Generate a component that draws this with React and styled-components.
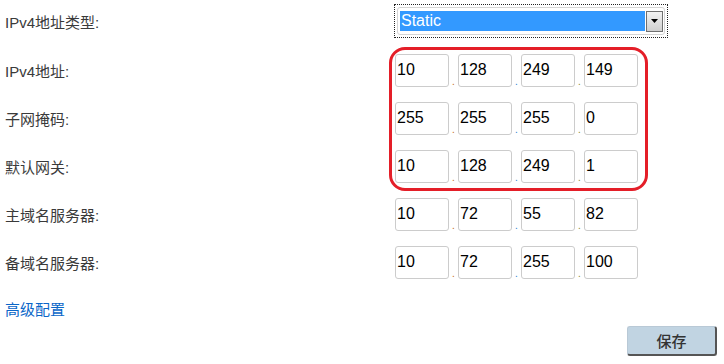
import React from 'react';
import styled, { createGlobalStyle } from 'styled-components';

const GlobalStyle = createGlobalStyle`
  html, body {
    margin: 0;
    padding: 0;
    background: #ffffff;
  }
  body {
    font-family: 'Liberation Sans', Arial, 'Noto Sans CJK SC', sans-serif;
  }
`;

const Page = styled.div`
  position: relative;
  width: 724px;
  height: 364px;
  overflow: hidden;
`;

const Form = styled.div`
  display: grid;
  grid-template-columns: 389px 1fr;
  padding: 4px 0 0 5px;
`;

const Label = styled.div`
  display: flex;
  align-items: center;
  height: ${(p) => (p.$first ? '34px' : '48px')};
  margin-bottom: ${(p) => (p.$first ? '8px' : '0')};
  font-size: 15px;
  color: #3a3a3a;
`;

const Field = styled.div`
  display: flex;
  align-items: center;
  height: ${(p) => (p.$first ? '34px' : '48px')};
  margin-bottom: ${(p) => (p.$first ? '8px' : '0')};
  padding-left: ${(p) => (p.$first ? '0' : '1px')};
`;

const SelectFocus = styled.div`
  width: 272px;
  height: 32px;
  border: 1px dotted #222;
  display: flex;
  align-items: center;
  justify-content: center;
`;

const SelectBox = styled.div`
  width: 268px;
  height: 28px;
  border: 1px solid #d4d4d4;
  border-radius: 3px;
  box-sizing: border-box;
  display: flex;
  align-items: center;
  padding: 0 1px 0 2px;
  gap: 1px;
`;

const SelectValue = styled.div`
  flex: 1;
  height: 20px;
  background: #3399ff;
  color: #ffffff;
  font-size: 16px;
  line-height: 20px;
  padding-left: 1px;
`;

const ArrowButton = styled.div`
  width: 17px;
  height: 21px;
  box-sizing: border-box;
  border: 1px solid #707070;
  background: linear-gradient(#f2f2f2, #cfcfcf);
  display: flex;
  align-items: center;
  justify-content: center;
`;

const Octet = styled.div`
  width: 54px;
  height: 33px;
  box-sizing: border-box;
  border: 1px solid #cccccc;
  border-radius: 3px;
  font-size: 16px;
  color: #000;
  display: flex;
  align-items: center;
  padding-left: 1px;
`;

const Dot = styled.span`
  width: 9px;
  height: 33px;
  display: flex;
  align-items: flex-end;
  justify-content: center;
  font-size: 10px;
  line-height: 10px;
  color: ${(p) => p.$color};
`;

const Highlight = styled.div`
  position: absolute;
  left: 389px;
  top: 47px;
  width: 259px;
  height: 144px;
  box-sizing: border-box;
  border: 3px solid #e41e28;
  border-radius: 16px;
  pointer-events: none;
`;

const Footer = styled.div`
  padding: 0 7px 0 5px;
  display: flex;
  flex-direction: column;
`;

const AdvancedLink = styled.a`
  font-size: 15px;
  color: #0a66c8;
  text-decoration: none;
  margin-top: 14px;
  height: 20px;
  line-height: 20px;
`;

const SaveButton = styled.button`
  align-self: flex-end;
  margin-top: 6px;
  width: 90px;
  height: 30px;
  background: #c1d4e2;
  border: 1px solid #b9c9d6;
  border-right: 2px solid #555;
  border-bottom: 2px solid #555;
  border-radius: 3px;
  font-family: 'Noto Sans CJK SC', sans-serif;
  font-size: 15px;
  font-weight: 500;
  color: #333;
  padding: 0;
`;

const dotColors = ['#c26b12', '#2a7fd0', '#8a8a2a'];

const rows = [
  { label: 'IPv4地址:', ip: ['10', '128', '249', '149'] },
  { label: '子网掩码:', ip: ['255', '255', '255', '0'] },
  { label: '默认网关:', ip: ['10', '128', '249', '1'] },
  { label: '主域名服务器:', ip: ['10', '72', '55', '82'] },
  { label: '备域名服务器:', ip: ['10', '72', '255', '100'] },
];

const IpField = ({ parts }) => (
  <Field>
    {parts.map((p, i) => (
      <React.Fragment key={i}>
        <Octet>{p}</Octet>
        {i < 3 && <Dot $color={dotColors[i]}>.</Dot>}
      </React.Fragment>
    ))}
  </Field>
);

const App = () => (
  <Page>
    <GlobalStyle />
    <Form>
      <Label $first>IPv4地址类型:</Label>
      <Field $first>
        <SelectFocus>
          <SelectBox>
            <SelectValue>Static</SelectValue>
            <ArrowButton>
              <svg width="7" height="4" viewBox="0 0 7 4">
                <path d="M0 0 H7 L3.5 4 Z" fill="#000" />
              </svg>
            </ArrowButton>
          </SelectBox>
        </SelectFocus>
      </Field>
      {rows.map((r) => (
        <React.Fragment key={r.label}>
          <Label>{r.label}</Label>
          <IpField parts={r.ip} />
        </React.Fragment>
      ))}
    </Form>
    <Footer>
      <AdvancedLink href="#">高级配置</AdvancedLink>
      <SaveButton>保存</SaveButton>
    </Footer>
    <Highlight />
  </Page>
);

export default App;
